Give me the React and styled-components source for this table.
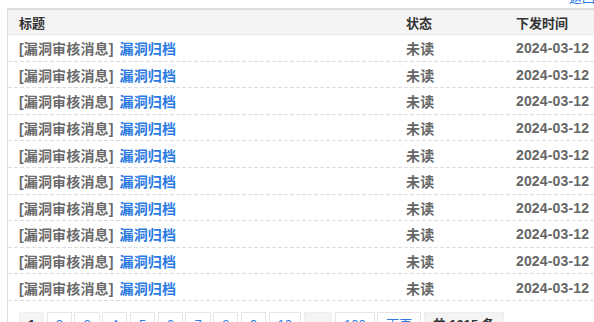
import React from 'react';
import styled, { createGlobalStyle } from 'styled-components';

const rows = Array.from({ length: 10 }, () => ({
  tag: '[漏洞审核消息]',
  title: '漏洞归档',
  status: '未读',
  date: '2024-03-12',
}));

const pages = ['1', '2', '3', '4', '5', '6', '7', '8', '9', '10'];

const App = () => {
  return (
    <>
      <GlobalStyle />
      <Page>
        <TopBar>
          <TopLink>返回列表</TopLink>
        </TopBar>

        <Table>
          <HeadRow>
            <HeadCell>标题</HeadCell>
            <HeadCell>状态</HeadCell>
            <HeadCell>下发时间</HeadCell>
          </HeadRow>

          {rows.map((row, i) => (
            <Row key={i}>
              <Cell>
                <Tag>{row.tag}</Tag>
                <Link>{row.title}</Link>
              </Cell>
              <Cell>{row.status}</Cell>
              <Cell>{row.date}</Cell>
            </Row>
          ))}

          <Pager>
            {pages.map((p) => (
              <PageBtn key={p} active={p === '1'}>
                {p}
              </PageBtn>
            ))}
            <PageBtn disabled>...</PageBtn>
            <PageBtn>100</PageBtn>
            <PageBtn>下页</PageBtn>
            <PageBtn disabled>共 1015 条</PageBtn>
          </Pager>
        </Table>
      </Page>
    </>
  );
};

export default App;

const GlobalStyle = createGlobalStyle`
  body {
    margin: 0;
    overflow: hidden;
    background: #ffffff;
    font-family: "Liberation Sans", "Noto Sans CJK SC", sans-serif;
  }
`;

// Main
const Page = styled.div`
  width: 640px;
`;

const TopBar = styled.div`
  height: 8px;
  overflow: hidden;
  padding-left: 569px;
`;

const TopLink = styled.span`
  display: block;
  margin-top: -9px;
  font-size: 13px;
  line-height: 13px;
  color: #2a7ae2;
  white-space: nowrap;
`;

const Table = styled.div`
  margin-left: 7px;
  border-left: 1px solid #dddddd;
  border-top: 2px solid #dddddd;
  height: 320px;
`;

const HeadRow = styled.div`
  display: grid;
  grid-template-columns: 387px 110px 1fr;
  align-items: center;
  height: 24px;
  padding-left: 11px;
  background: #f4f4f4;
  border-bottom: 1px solid #e6e6e6;
`;

const HeadCell = styled.div`
  font-size: 13px;
  font-weight: bold;
  color: #333333;
`;

const Row = styled.div`
  display: grid;
  grid-template-columns: 387px 110px 1fr;
  align-items: center;
  height: 26.6px;
  padding-left: 11px;
  box-sizing: border-box;
  background-image: repeating-linear-gradient(
    to right,
    #dddddd 0,
    #dddddd 4px,
    transparent 4px,
    transparent 6px
  );
  background-size: 100% 1px;
  background-position: 0 100%;
  background-repeat: no-repeat;
`;

const Cell = styled.div`
  font-size: 14px;
  font-weight: bold;
  color: #666666;
  white-space: nowrap;
  letter-spacing: 0.15px;
`;

const Tag = styled.span`
  color: #6a6a6a;
`;

const Link = styled.span`
  margin-left: 6px;
  color: #2a7ae2;
`;

const Pager = styled.div`
  display: flex;
  gap: 2.5px;
  padding: 11px 0 0 11px;
`;

const PageBtn = styled.div`
  height: 24px;
  padding: 0 8px;
  border: 1px solid ${(props) => (props.disabled || props.active ? '#eeeeee' : '#e6e6e6')};
  background: ${(props) => (props.active || props.disabled ? '#f4f4f4' : '#ffffff')};
  font-size: 13px;
  line-height: 24px;
  font-weight: ${(props) => (props.active || props.disabled ? 'bold' : 'normal')};
  color: ${(props) => (props.active || props.disabled ? '#333333' : '#2a7ae2')};
  white-space: nowrap;
`;
